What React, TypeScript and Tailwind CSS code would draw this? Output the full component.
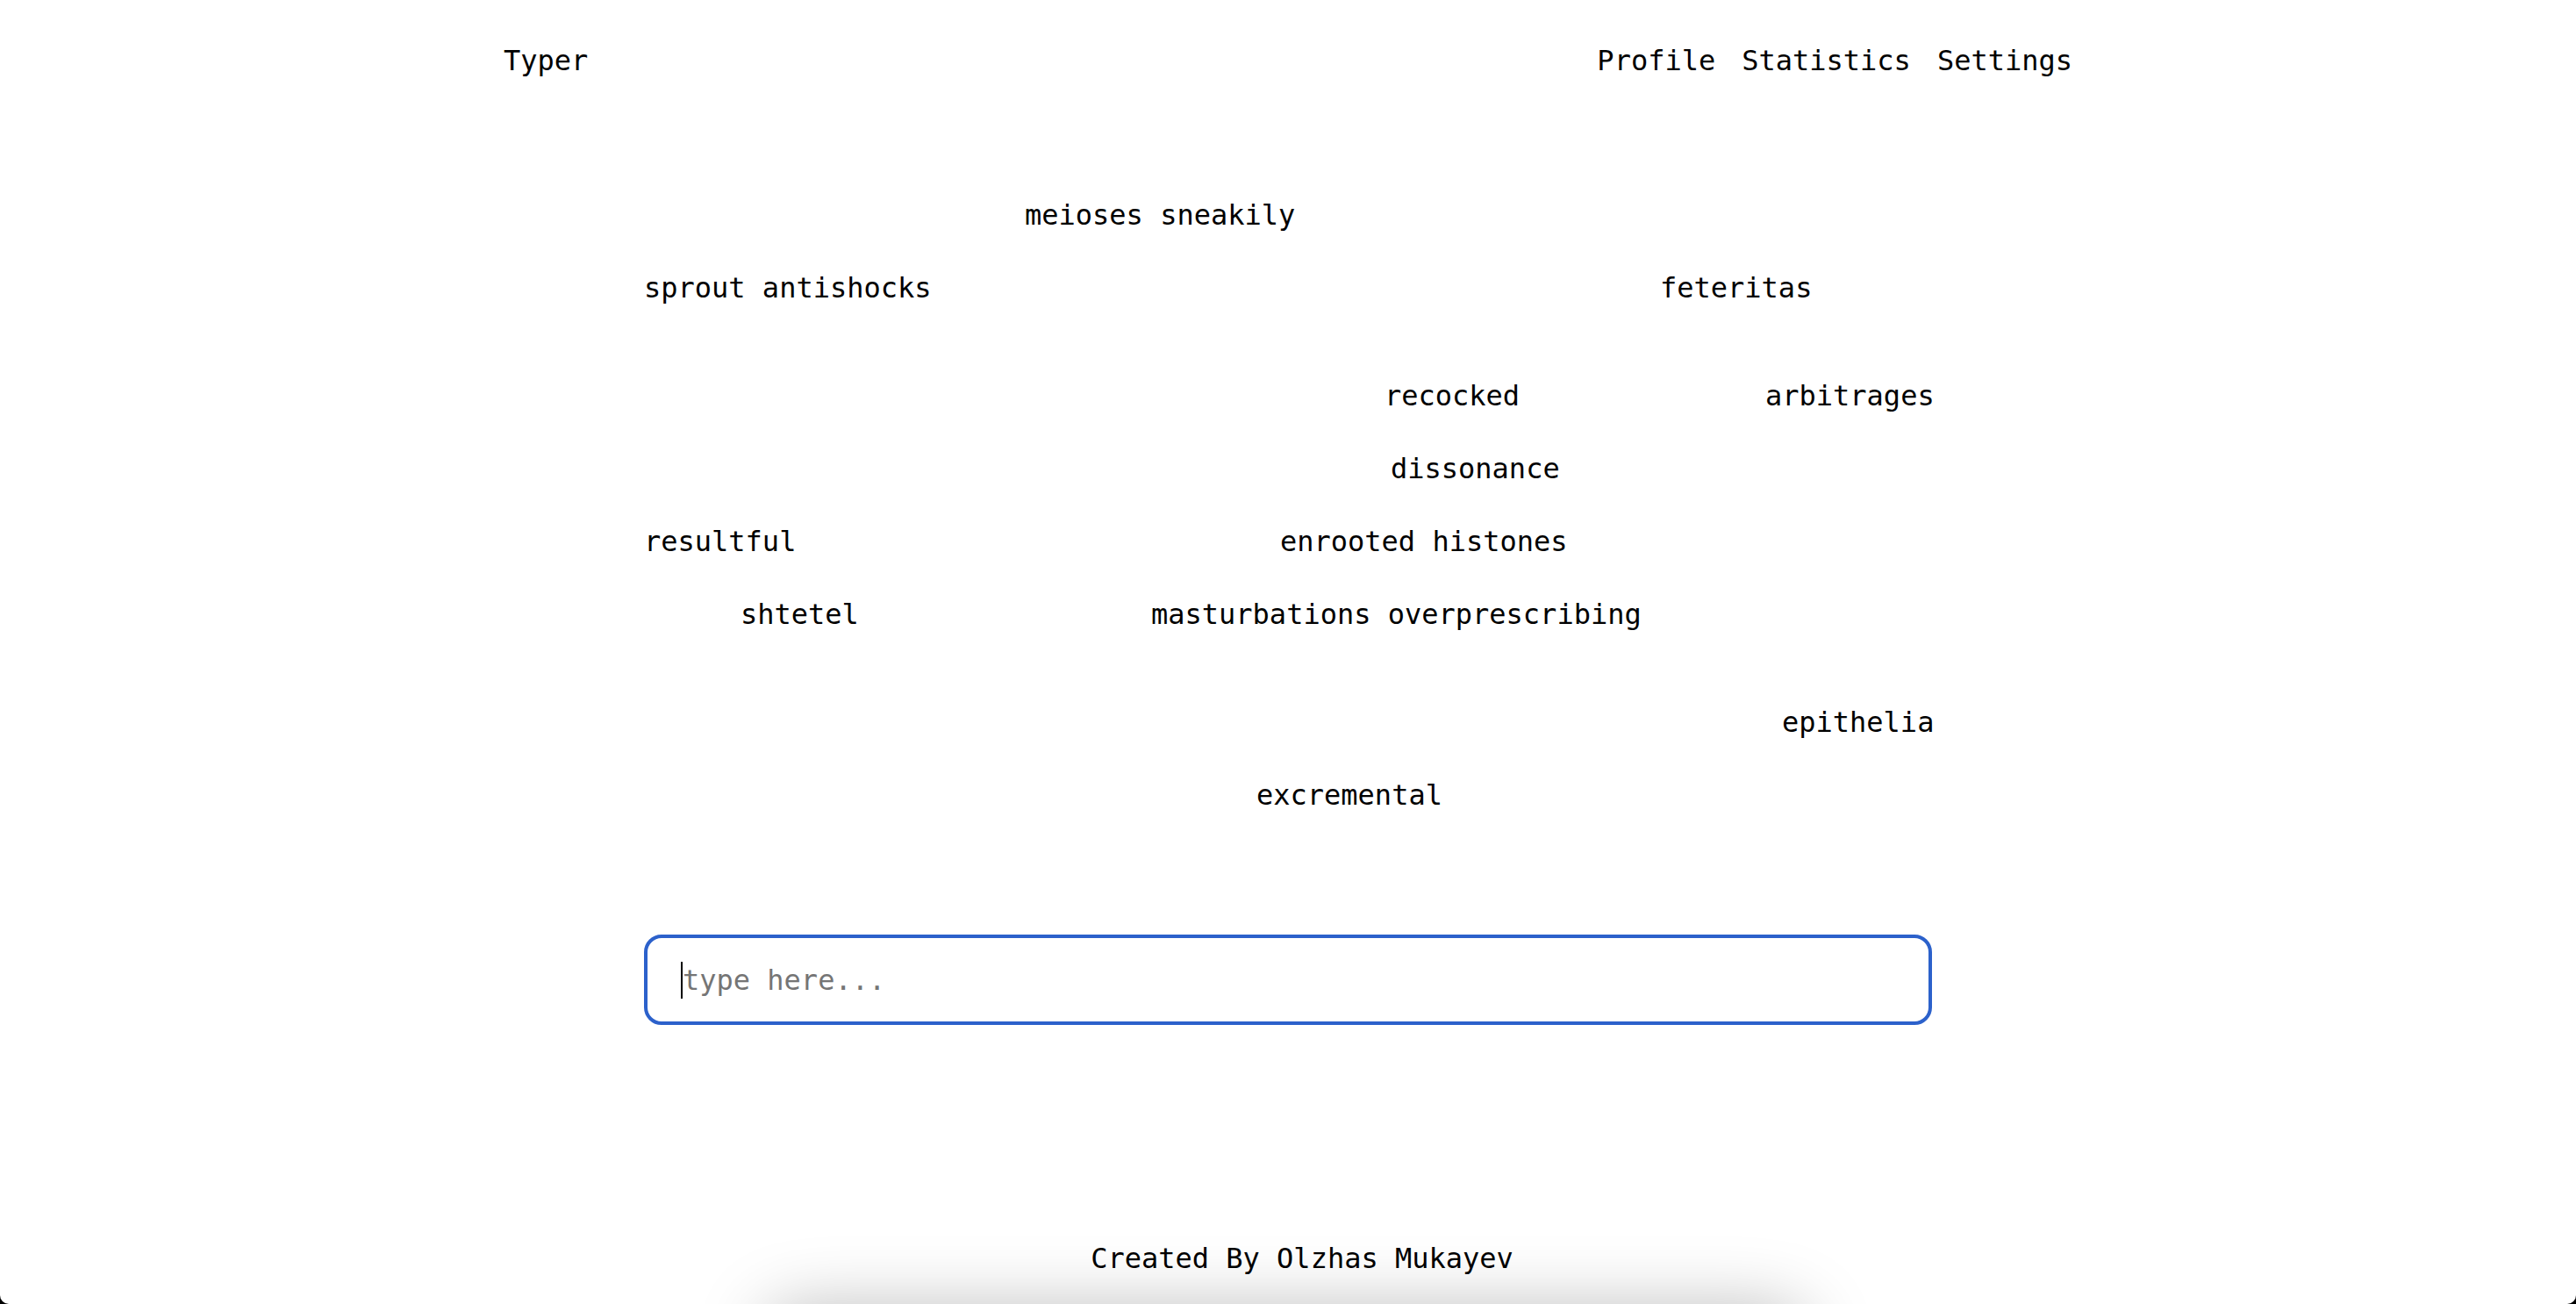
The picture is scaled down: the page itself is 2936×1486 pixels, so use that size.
const words = [
  { text: 'meioses sneakily', x: 434, y: 136 },
  { text: 'sprout antishocks', x: 0, y: 219 },
  { text: 'feteritas', x: 1158, y: 219 },
  { text: 'recocked', x: 844, y: 342 },
  { text: 'arbitrages', x: 1278, y: 342 },
  { text: 'dissonance', x: 851, y: 425 },
  { text: 'resultful', x: 0, y: 508 },
  { text: 'enrooted histones', x: 725, y: 508 },
  { text: 'shtetel', x: 110, y: 591 },
  { text: 'masturbations overprescribing', x: 578, y: 591 },
  { text: 'epithelia', x: 1297, y: 714 },
  { text: 'excremental', x: 698, y: 797 },
];

const NavLink = ({ label }: { label: string }) => (
  <a href="#" className="text-black">
    {label}
  </a>
);

export default function App() {
  return (
    <div className="h-[1486px] w-full overflow-hidden bg-black">
      <div className="relative flex h-full w-full flex-col overflow-hidden rounded-b-[10px] bg-white font-['DejaVu_Sans_Mono',monospace] text-[32px] leading-[40px] text-black">
        <header className="mx-auto flex w-[1788px] items-center justify-between pt-[49px]">
          <a href="#" className="text-black">
            Typer
          </a>
          <nav className="flex gap-[30px]">
            <NavLink label="Profile" />
            <NavLink label="Statistics" />
            <NavLink label="Settings" />
          </nav>
        </header>

        <main className="mx-auto flex w-[1468px] flex-col">
          <div className="relative h-[976px] w-full">
            {words.map((w) => (
              <span
                key={w.text}
                className="absolute whitespace-nowrap"
                style={{ left: w.x, top: w.y }}
              >
                {w.text}
              </span>
            ))}
          </div>
          <div className="relative">
            <input
              type="text"
              placeholder="type here..."
              className="h-[103px] w-full rounded-[20px] border-4 border-[#2c61cb] bg-white pl-[40px] pr-[40px] font-['DejaVu_Sans_Mono',monospace] text-[32px] text-black outline-none placeholder:text-[#757575]"
            />
            <span className="pointer-events-none absolute left-[42px] top-[31px] h-[42px] w-[2px] bg-black" />
          </div>
        </main>

        <footer className="mt-auto flex justify-center pb-[32px] pl-[32px]">
          <span>Created By Olzhas Mukayev</span>
        </footer>

        <div className="pointer-events-none absolute left-[870px] top-[1492px] h-[80px] w-[1190px] rounded-full shadow-[0_0_80px_rgba(0,0,0,0.28)]" />
      </div>
    </div>
  );
}
